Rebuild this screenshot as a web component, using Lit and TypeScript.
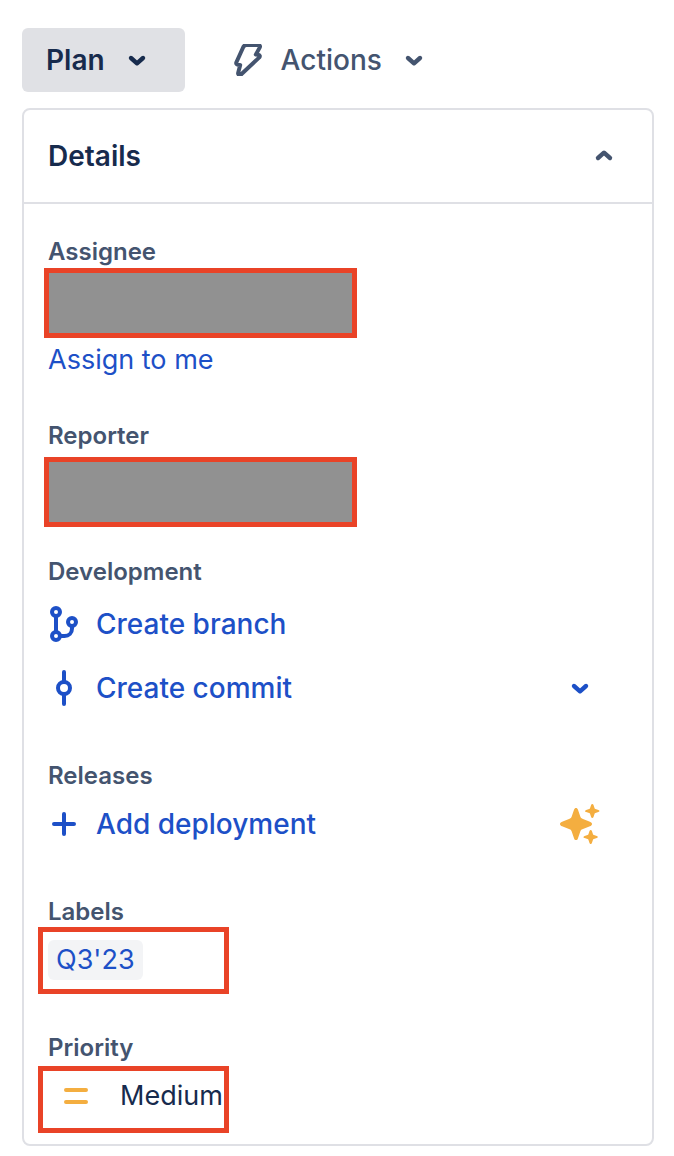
import { LitElement, html, css, svg } from "lit";
import { customElement, property, state } from "lit/decorators.js";

const chevron = (up = false) => html`
  <svg class="icon" viewBox="0 0 32 32" width="32" height="32" aria-hidden="true">
    <path
      d=${up ? "M10 18 16 12.700l6 5.300" : "M10 14 16 19.300l6-5.300"}
      fill="none" stroke="currentColor" stroke-width="4.400"
      stroke-linecap="round" stroke-linejoin="round"
    />
  </svg>
`;

const icon = (content: unknown, size = 32) => html`
  <svg class="icon" viewBox="0 0 ${size} ${size}" width=${size} height=${size} aria-hidden="true">
    ${content}
  </svg>
`;

const bolt = svg`
  <path transform="translate(-1 -1)" d="M14.500 2H26c1.600 0 2.400 1.200 1.800 2.400l-4 7.200 2.400.2c1.700.2 2 1.500 1.100 2.600L9.300 31.300c-1.400 1.500-3.600.4-3.100-1.500l2-7.700-2.400-.3c-1.400-.2-1.900-1.300-1.400-2.500L11.300 4C12 2.600 13 2 14.500 2z"
    fill="none" stroke="currentColor" stroke-width="4" stroke-linejoin="round" />
`;

const branch = svg`
  <g fill="none" stroke="currentColor" stroke-width="4">
    <circle cx="10" cy="6" r="4" /><circle cx="10" cy="30" r="4" /><circle cx="26" cy="16" r="4" />
    <path d="M10 10v16M14 30h4.500c4.500 0 7.500-3 7.500-7.500V20" />
  </g>
`;

const commit = svg`
  <g fill="none" stroke="currentColor" stroke-width="4" stroke-linecap="round">
    <circle cx="18" cy="18" r="6" />
    <path d="M18 2v9M18 25v9" />
  </g>
`;

const plus = svg`
  <path d="M16 6v20M6 16h20" fill="none" stroke="currentColor" stroke-width="4" stroke-linecap="round" />
`;

const sparkles = svg`
  <g fill="#f4ae40">
    <path d="M16 4c1 0 1.500.6 1.900 1.600l2.400 7c.4 1.200 1 1.800 2.100 2.200l7.500 2.900c1.400.5 2.100 1.200 2.100 2.300s-.7 1.800-2.100 2.300l-7.500 2.900c-1.100.4-1.700 1-2.100 2.200l-2.400 7c-.4 1-.9 1.600-1.900 1.600s-1.500-.6-1.900-1.600l-2.400-7c-.4-1.200-1-1.800-2.100-2.200l-7.500-2.900C.7 21.800 0 21.100 0 20s.7-1.800 2.100-2.300l7.500-2.900c1.100-.4 1.700-1 2.100-2.200l2.400-7C14.500 4.600 15 4 16 4z" />
    <path d="M32.300 0c.6 0 .9.400 1.200 1.100l1 2.900c.2.600.4.800 1 1l2.900 1c.7.300 1.100.5 1.100 1s-.4.800-1.100 1.100l-2.900 1c-.6.200-.8.400-1 1l-1 2.900c-.3.700-.6 1.100-1.200 1.100s-.9-.4-1.200-1.100l-1-2.900c-.2-.6-.4-.8-1-1l-2.900-1c-.7-.3-1.100-.5-1.100-1.100s.4-.8 1.100-1.100l2.900-1c.6-.2.8-.4 1-1l1-2.800C31.400.4 31.700 0 32.300 0z" />
    <path d="M30.700 26c.6 0 .9.400 1.200 1.100l1 2.900c.2.600.4.800 1 1l2.900 1c.7.300 1.100.5 1.100 1s-.4.800-1.100 1.100l-2.900 1c-.6.200-.8.400-1 1l-1 2.900c-.3.700-.6 1.100-1.200 1.100s-.9-.4-1.200-1.100l-1-2.900c-.2-.6-.4-.8-1-1l-2.900-1c-.7-.3-1.100-.5-1.100-1.100s.4-.8 1.100-1.100l2.900-1c.6-.2.8-.4 1-1l1-2.800c.3-.7.600-1.100 1.200-1.100z" />
  </g>
`;

const medium = svg`
  <path d="M6 10h20M6 22h20" fill="none" stroke="#f4ae40" stroke-width="4" stroke-linecap="round" />
`;

@customElement("detail-field")
class DetailField extends LitElement {
  @property() label = "";

  static styles = css`
    :host {
      display: block;
    }
    .label {
      margin: 0;
      font-size: 24px;
      line-height: 32px;
      font-weight: 600;
      color: #44546f;
    }
  `;

  render() {
    return html`<h3 class="label">${this.label}</h3><slot></slot>`;
  }
}

@customElement("app-root")
class AppRoot extends LitElement {
  @state() private open = true;

  static styles = css`
    :host {
      display: block;
      box-sizing: border-box;
      padding: 28px 20px 10px 22px;
      background: #fff;
      color: #172b4d;
      font-family: Inter, "Liberation Sans", sans-serif;
      font-size: 27px;
      line-height: 40px;
    }
    *,
    *::before {
      box-sizing: border-box;
    }
    button {
      margin: 0;
      padding: 0;
      border: 0;
      background: none;
      color: inherit;
      font: inherit;
      text-align: left;
      cursor: pointer;
    }
    a {
      color: #1d50c7;
      text-decoration: none;
    }
    .icon {
      display: block;
      flex: none;
    }
    .toolbar {
      display: flex;
      gap: 24px;
      margin-bottom: 16px;
    }
    .toolbar-button {
      display: flex;
      align-items: center;
      gap: 16px;
      height: 64px;
      padding: 0 24px;
      border-radius: 6px;
      color: #44546f;
      font-size: 28px;
      font-weight: 500;
    }
    .status {
      padding-right: 32px;
      background: #e0e1e5;
      color: #172b4d;
      font-weight: 600;
    }
    .panel {
      border: 2px solid #dfe0e5;
      border-radius: 8px;
    }
    .panel-title {
      margin: 0;
      font: inherit;
    }
    .panel-toggle {
      display: flex;
      align-items: center;
      justify-content: space-between;
      width: 100%;
      height: 92px;
      padding: 0 32px 0 24px;
      font-size: 28px;
      font-weight: 600;
    }
    .panel-toggle .icon {
      color: #44546f;
    }
    .fields {
      display: flex;
      flex-direction: column;
      gap: 40px;
      padding: 32px 32px 16px 24px;
      border-top: 2px solid #dfe0e5;
    }
    .value {
      position: relative;
      display: flex;
      align-items: center;
      height: 64px;
    }
    .below {
      padding-top: 8px;
    }
    .mark::before {
      content: "";
      position: absolute;
      top: -1px;
      left: -10px;
      width: 191px;
      height: 67px;
      border: 5px solid #e94327;
      pointer-events: none;
    }
    .redacted::before {
      top: 0;
      left: -4px;
      width: 313px;
      height: 70px;
      background: #919191;
    }
    .reporter::before {
      top: 5px;
    }
    .priority::before {
      top: 2px;
    }
    .rows {
      padding-top: 4px;
    }
    .row {
      display: flex;
      align-items: center;
      justify-content: space-between;
      height: 64px;
      padding-right: 20px;
      color: #1d50c7;
      font-size: 28px;
      font-weight: 500;
    }
    .action {
      display: grid;
      grid-template-columns: 32px auto;
      align-items: center;
      justify-items: center;
      gap: 16px;
    }
    .trailing {
      display: grid;
      place-items: center;
      width: 40px;
      height: 40px;
    }
    .tag {
      padding: 0 8px;
      border-radius: 6px;
      background: #f3f4f6;
      line-height: 40px;
    }
    .priority {
      gap: 28px;
      padding-left: 12px;
    }
  `;

  render() {
    return html`
      <div class="toolbar">
        <button class="toolbar-button status">Plan ${chevron()}</button>
        <button class="toolbar-button">${icon(bolt)} Actions ${chevron()}</button>
      </div>
      <section class="panel">
        <h2 class="panel-title">
          <button class="panel-toggle" aria-expanded=${this.open} @click=${() => (this.open = !this.open)}>
            Details ${chevron(this.open)}
          </button>
        </h2>
        ${this.open ? this.renderFields() : null}
      </section>
    `;
  }

  private renderFields() {
    return html`
      <div class="fields">
        <detail-field label="Assignee">
          <div class="value mark redacted"></div>
          <div class="below"><a href="#assign">Assign to me</a></div>
        </detail-field>
        <detail-field label="Reporter">
          <div class="value mark redacted reporter"></div>
        </detail-field>
        <detail-field label="Development">
          <div class="rows">
            <div class="row">
              <a class="action" href="#branch">${icon(branch, 36)} <span>Create branch</span></a>
            </div>
            <div class="row">
              <a class="action" href="#commit">${icon(commit, 36)} <span>Create commit</span></a>
              <button class="trailing" aria-label="More commit options">${chevron()}</button>
            </div>
          </div>
        </detail-field>
        <detail-field label="Releases">
          <div class="row">
            <a class="action" href="#deployment">${icon(plus)} <span>Add deployment</span></a>
            <span class="trailing">${icon(sparkles, 40)}</span>
          </div>
        </detail-field>
        <detail-field label="Labels">
          <div class="value mark"><a class="tag" href="#label">Q3'23</a></div>
        </detail-field>
        <detail-field label="Priority">
          <div class="value mark priority">${icon(medium)} <span>Medium</span></div>
        </detail-field>
      </div>
    `;
  }
}
